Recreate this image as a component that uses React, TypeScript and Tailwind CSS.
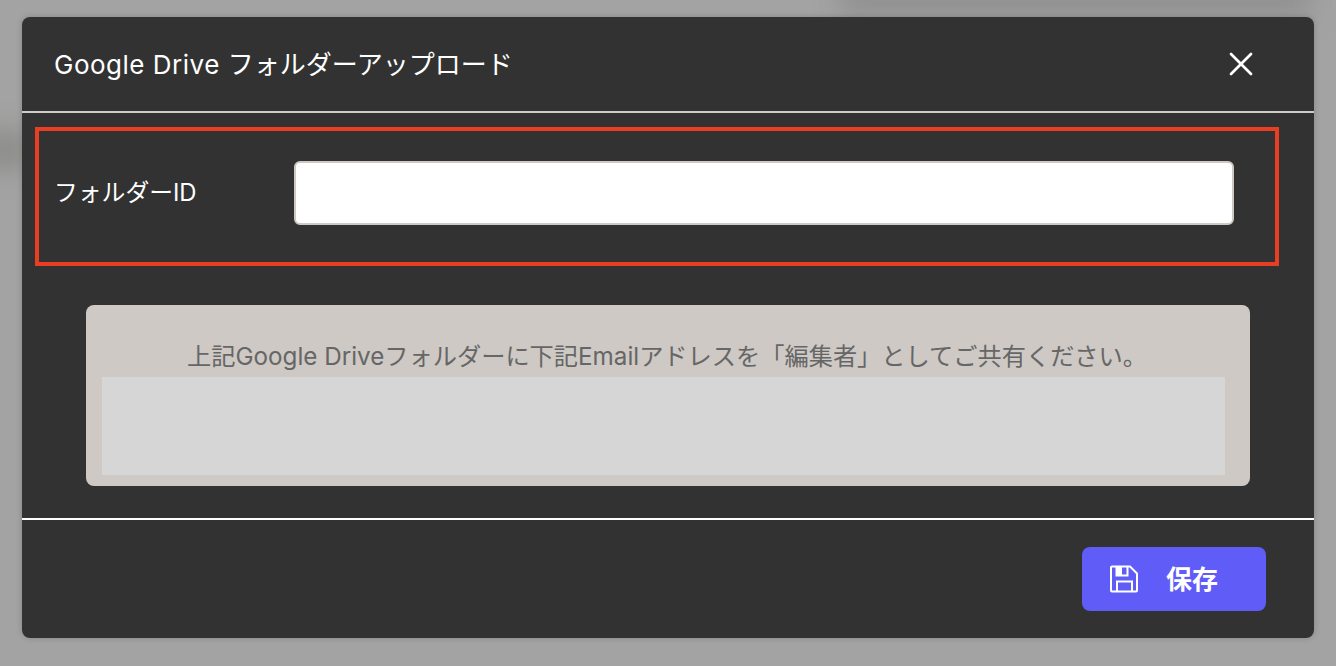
import React from "react";
import { X } from "lucide-react";

const fontStack = {
  fontFamily: '"Inter", "Noto Sans CJK JP", sans-serif',
};

function SaveIcon() {
  return (
    <svg width="28" height="28" viewBox="0 0 28 28" fill="none" stroke="white" strokeWidth="2">
      <path d="M2 1.500H20L27 8.500V25.500A1 1 0 0 1 26 26.500H2A1 1 0 0 1 1 25.500V2.500A1 1 0 0 1 2 1.500Z" />
      <path d="M6.500 1.500V10.500H17.500V1.500" />
      <path d="M7 26.500V16.500H22V26.500" />
      <rect x="6" y="2" width="6" height="8" fill="white" stroke="none" />
    </svg>
  );
}

export default function App() {
  return (
    <div className="relative h-[666px] w-[1336px] overflow-hidden bg-[#a3a3a3] pl-[22px] pt-[17px]" style={fontStack}>
      {/* blurred page behind the overlay */}
      <div className="absolute -top-3 left-[840px] h-6 w-[470px] bg-[#8c8c8c] blur-md"></div>
      <div className="absolute left-[-20px] top-[130px] h-10 w-[50px] bg-[#8e8e8c] blur-md"></div>

      <div className="relative flex h-[621px] w-[1292px] flex-col rounded-lg bg-[#323232] shadow-[0_0_6px_rgba(0,0,0,0.18)]">
        <div className="flex h-[94px] items-center justify-between pl-8 pr-[53px]">
          <h2 className="text-[26px] text-white">
            <span className="mr-[8px] tracking-[0.5px]">Google Drive</span>フォルダーアップロード
          </h2>
          <X className="text-white" size={40} strokeWidth={1.6} />
        </div>
        <div className="h-[2px] bg-[#d2ccc6]"></div>

        <div className="ml-[13px] mr-[35px] mt-[14px] flex h-[139px] items-center border-[4px] border-[#e83e24] pb-[7px] pl-[15px]">
          <label className="w-[240px] text-[23.800px] text-white">フォルダーID</label>
          <input
            type="text"
            className="h-16 w-[940px] rounded-md border-2 border-[#cfc9c3] bg-white"
          />
        </div>

        <div className="ml-16 mt-[39px] h-[181px] w-[1164px] rounded-lg bg-[#cec9c4] px-4 pt-[38px]">
          <p className="h-[34px] pr-[2px] text-center text-[24.220px] leading-[28px] text-[#666666]">
            上記Google Driveフォルダーに下記Emailアドレスを「編集者」としてご共有ください。
          </p>
          <div className="h-[98px] w-[1123px] bg-[#d6d6d6]"></div>
        </div>

        <div className="mt-8 h-[2px] bg-white"></div>

        <div className="flex justify-end pr-12 pt-[27px]">
          <button className="flex h-16 w-[184px] items-center gap-[28px] rounded-lg bg-[#5f5cf7] pl-7 text-[26px] font-bold text-white">
            <SaveIcon />
            保存
          </button>
        </div>
      </div>
    </div>
  );
}
